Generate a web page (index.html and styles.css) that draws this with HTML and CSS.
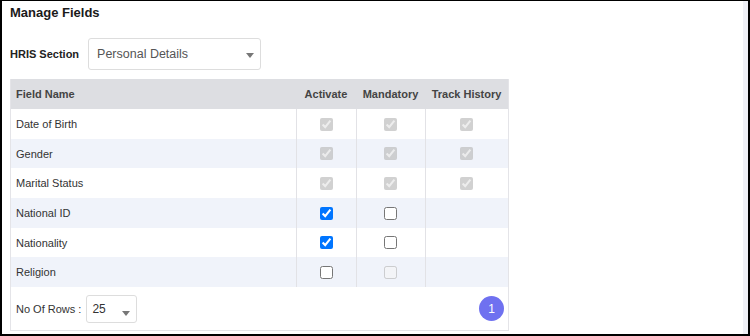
FILE: index.html
```html
<!DOCTYPE html>
<html lang="en">

<head>
    <meta charset="UTF-8">
    <meta name="viewport" content="width=device-width, initial-scale=1.0">
    <title>Manage Fields</title>
    <link rel="stylesheet" href="styles.css">
</head>

<body>
    <div class="frame">
        <div class="page">
            <h1 class="title">Manage Fields</h1>

            <div class="section-row">
                <label class="section-label" for="section">HRIS Section</label>
                <div class="select select-section">
                    <span>Personal Details</span>
                    <span class="caret"></span>
                </div>
            </div>

            <div class="grid-box">
                <table class="fields">
                    <colgroup>
                        <col class="c-name">
                        <col class="c-act">
                        <col class="c-man">
                        <col class="c-track">
                    </colgroup>
                    <thead>
                        <tr>
                            <th class="name">Field Name</th>
                            <th>Activate</th>
                            <th>Mandatory</th>
                            <th>Track History</th>
                        </tr>
                    </thead>
                    <tbody>
                        <tr>
                            <td class="name">Date of Birth</td>
                            <td><input type="checkbox" checked disabled></td>
                            <td><input type="checkbox" checked disabled></td>
                            <td><input type="checkbox" checked disabled></td>
                        </tr>
                        <tr>
                            <td class="name">Gender</td>
                            <td><input type="checkbox" checked disabled></td>
                            <td><input type="checkbox" checked disabled></td>
                            <td><input type="checkbox" checked disabled></td>
                        </tr>
                        <tr>
                            <td class="name">Marital Status</td>
                            <td><input type="checkbox" checked disabled></td>
                            <td><input type="checkbox" checked disabled></td>
                            <td><input type="checkbox" checked disabled></td>
                        </tr>
                        <tr>
                            <td class="name">National ID</td>
                            <td><input type="checkbox" checked></td>
                            <td><input type="checkbox"></td>
                            <td></td>
                        </tr>
                        <tr>
                            <td class="name">Nationality</td>
                            <td><input type="checkbox" checked></td>
                            <td><input type="checkbox"></td>
                            <td></td>
                        </tr>
                        <tr>
                            <td class="name">Religion</td>
                            <td><input type="checkbox"></td>
                            <td><input type="checkbox" disabled></td>
                            <td></td>
                        </tr>
                    </tbody>
                </table>

                <div class="grid-footer">
                    <div class="rows-pick">
                        <span>No Of Rows :</span>
                        <div class="select select-rows">
                            <span>25</span>
                            <span class="caret"></span>
                        </div>
                    </div>
                    <span class="page-num">1</span>
                </div>
            </div>
        </div>
        <div class="side-strip"></div>
    </div>
</body>

</html>
```

FILE: styles.css
```css
* {
    box-sizing: border-box;
}

body {
    margin: 0;
    font-family: "Liberation Sans", Arial, sans-serif;
    color: #333333;
    background: #ffffff;
}

.frame {
    /* black screenshot frame */
    width: 750px;
    height: 336px;
    border-style: solid;
    border-color: #000000;
    border-width: 1px 2px 2px 2px;
    display: flex;
}

.page {
    flex: 1;
    padding: 4px 0 0 8px;
}

.side-strip {
    width: 5px;
    background: #eff0f6;
}

.title {
    margin: 0;
    font-size: 13px;
    line-height: 16px;
    font-weight: bold;
    color: #1a1a1a;
}

.section-row {
    display: flex;
    align-items: center;
    gap: 9px;
    margin-top: 17px;
}

.section-label {
    font-size: 11px;
    font-weight: bold;
    color: #222222;
}

.select {
    /* fake dropdown */
    display: flex;
    align-items: center;
    justify-content: space-between;
    border: 1px solid #dddddd;
    border-radius: 3px;
    background: #ffffff;
    color: #555555;
}

.select-section {
    width: 173px;
    height: 32px;
    padding: 0 6px 0 8px;
    font-size: 12.5px;
}

.caret {
    width: 0;
    height: 0;
    border-left: 4px solid transparent;
    border-right: 4px solid transparent;
    border-top: 5px solid #777777;
    margin-top: 2px;
}

.grid-box {
    width: 499px;
    margin: 9px 0 0 0;
    border: 1px solid #e4e4e8;
    border-top: none;
}

.fields {
    width: 100%;
    border-collapse: collapse;
    table-layout: fixed;
    font-size: 11px;
}

.c-name { width: 285px; }
.c-act { width: 60px; }
.c-man { width: 69px; }
.c-track { width: 83px; }

.fields th {
    height: 30px;
    background: #dddee2;
    color: #444444;
    font-weight: bold;
    text-align: center;
    padding: 0;
}

.fields td {
    height: 29.7px;
    padding: 0;
    text-align: center;
    border-left: 1px solid #e2e2e6;
    color: #333333;
}

.fields .name {
    text-align: left;
    padding-left: 5px;
    border-left: none;
}

.fields tbody tr:nth-child(even) {
    background: #f0f3fa;
}

.fields input {
    margin: 0;
    width: 13px;
    height: 13px;
    vertical-align: middle;
}

.grid-footer {
    height: 43px;
    display: flex;
    align-items: center;
    justify-content: space-between;
    padding: 0 4px 0 5px;
    font-size: 11px;
}

.rows-pick {
    display: flex;
    align-items: center;
    gap: 5px;
}

.select-rows {
    width: 51px;
    height: 28px;
    padding: 0 6px 0 5px;
    font-size: 12px;
    color: #333333;
}

.select-rows .caret {
    margin-top: 10px;
}

.page-num {
    width: 25px;
    height: 25px;
    border-radius: 50%;
    background: #6f71f0;
    color: #ffffff;
    font-size: 12px;
    display: flex;
    align-items: center;
    justify-content: center;
}
```
